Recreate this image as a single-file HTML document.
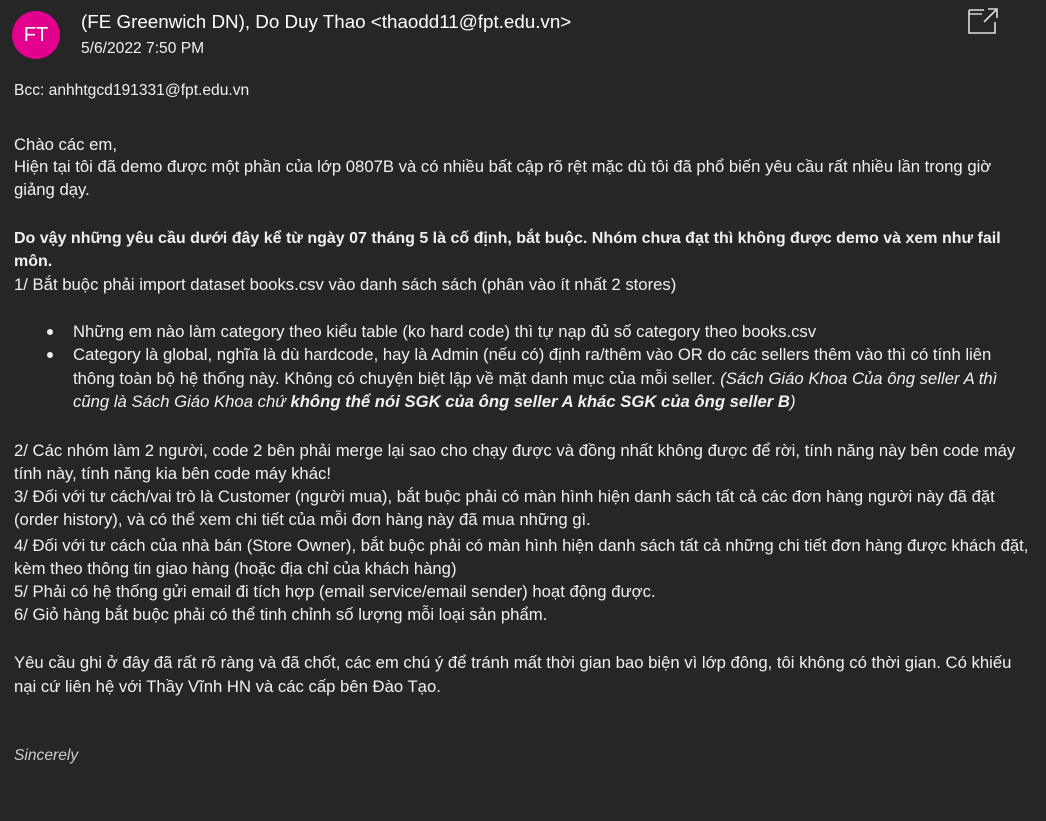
<!DOCTYPE html>
<html><head><meta charset="utf-8"><style>
html,body{margin:0;padding:0;}
body{width:1046px;height:821px;background:#262626;color:#f0f0f0;font-family:"Liberation Sans",sans-serif;font-size:16.7px;position:relative;overflow:hidden;}
.l{position:absolute;left:14px;white-space:nowrap;line-height:20px;}
.av{position:absolute;left:12px;top:11px;width:48px;height:48px;border-radius:50%;background:#e3008c;color:#fff;font-size:20px;line-height:48px;text-align:center;}
.b{font-weight:bold;font-size:16px;}
.i{font-style:italic;}
.dot{position:absolute;left:47px;width:6px;height:6px;border-radius:50%;background:#f0f0f0;}
</style></head><body>
<div class="av">FT</div>
<div class="l" style="left:81px;top:10px;font-size:18.8px;line-height:24px;color:#fff">(FE Greenwich DN), Do Duy Thao &lt;thaodd11@fpt.edu.vn&gt;</div>
<div class="l" style="left:81px;top:39px;font-size:15.6px">5/6/2022 7:50 PM</div>
<svg style="position:absolute;left:960px;top:0" width="46" height="40" viewBox="960 0 46 40">
<path d="M969 10 H984 M969 10 V33 H995 V22" stroke="#ddd" stroke-width="1.6" fill="none"/>
<path d="M969 14 H982" stroke="#ddd" stroke-width="1.4" fill="none"/>
<path d="M984 22 L996 10 M988 9 H997 V18" stroke="#ddd" stroke-width="1.6" fill="none"/>
</svg>
<div class="l" style="top:81px;font-size:15.6px">Bcc: anhhtgcd191331@fpt.edu.vn</div>
<div class="l" style="top:135px">Chào các em,</div>
<div class="l" style="top:157px">Hiện tại tôi đã demo được một phần của lớp 0807B và có nhiều bất cập rõ rệt mặc dù tôi đã phổ biến yêu cầu rất nhiều lần trong giờ</div>
<div class="l" style="top:180px">giảng dạy.</div>
<div class="l b" style="top:229px">Do vậy những yêu cầu dưới đây kể từ ngày 07 tháng 5 là cố định, bắt buộc. Nhóm chưa đạt thì không được demo và xem như fail</div>
<div class="l b" style="top:252px">môn.</div>
<div class="l" style="top:275px">1/ Bắt buộc phải import dataset books.csv vào danh sách sách (phân vào ít nhất 2 stores)</div>
<div class="dot" style="top:329px"></div>
<div class="l" style="left:73px;top:322px">Những em nào làm category theo kiểu table (ko hard code) thì tự nạp đủ số category theo books.csv</div>
<div class="dot" style="top:352px"></div>
<div class="l" style="left:73px;top:345px">Category là global, nghĩa là dù hardcode, hay là Admin (nếu có) định ra/thêm vào OR do các sellers thêm vào thì có tính liên</div>
<div class="l" style="left:73px;top:369px">thông toàn bộ hệ thống này. Không có chuyện biệt lập về mặt danh mục của mỗi seller. <span class="i">(Sách Giáo Khoa Của ông seller A thì</span></div>
<div class="l i" style="left:73px;top:392px">cũng là Sách Giáo Khoa chứ <b>không thể nói SGK của ông seller A khác SGK của ông seller B</b>)</div>
<div class="l" style="top:441px">2/ Các nhóm làm 2 người, code 2 bên phải merge lại sao cho chạy được và đồng nhất không được để rời, tính năng này bên code máy</div>
<div class="l" style="top:464px">tính này, tính năng kia bên code máy khác!</div>
<div class="l" style="top:487px">3/ Đối với tư cách/vai trò là Customer (người mua), bắt buộc phải có màn hình hiện danh sách tất cả các đơn hàng người này đã đặt</div>
<div class="l" style="top:510px">(order history), và có thể xem chi tiết của mỗi đơn hàng này đã mua những gì.</div>
<div class="l" style="top:536px">4/ Đối với tư cách của nhà bán (Store Owner), bắt buộc phải có màn hình hiện danh sách tất cả những chi tiết đơn hàng được khách đặt,</div>
<div class="l" style="top:559px">kèm theo thông tin giao hàng (hoặc địa chỉ của khách hàng)</div>
<div class="l" style="top:582px">5/ Phải có hệ thống gửi email đi tích hợp (email service/email sender) hoạt động được.</div>
<div class="l" style="top:605px">6/ Giỏ hàng bắt buộc phải có thể tinh chỉnh số lượng mỗi loại sản phẩm.</div>
<div class="l" style="top:653px">Yêu cầu ghi ở đây đã rất rõ ràng và đã chốt, các em chú ý để tránh mất thời gian bao biện vì lớp đông, tôi không có thời gian. Có khiếu</div>
<div class="l" style="top:677px">nại cứ liên hệ với Thầy Vĩnh HN và các cấp bên Đào Tạo.</div>
<div class="l i" style="top:746px;color:#ccc;font-size:15.6px">Sincerely</div>
</body></html>
